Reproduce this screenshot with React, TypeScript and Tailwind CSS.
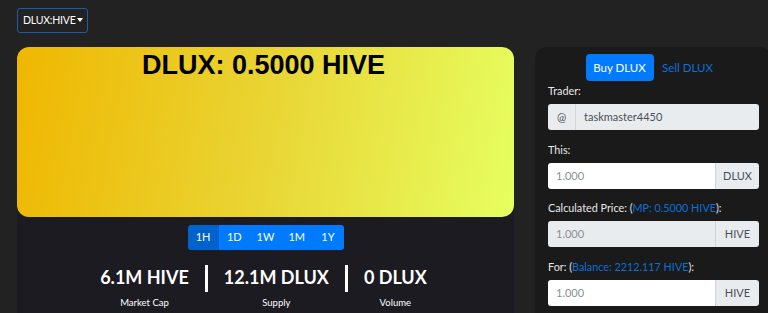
export default function App() {
  const font = { fontFamily: 'Lato, "Noto Sans", sans-serif' };
  return (
    <div className="w-[768px] h-[313px] overflow-hidden bg-[#222222] text-white" style={font}>
      <div className="pl-[17px] pt-[8px]">
        <button className="h-[25px] w-[71px] pl-[5px] border border-[#1f5ba6] rounded-[3px] text-[10.5px] tracking-[-0.2px] flex items-center gap-[1px] text-white">
          DLUX:HIVE
          <span className="inline-block w-0 h-0 border-l-[3.5px] border-r-[3.5px] border-t-[4px] border-l-transparent border-r-transparent border-t-white mb-[2px]" />
        </button>
      </div>
      <div className="flex pl-[17px] pt-[14px] gap-[21px]">
        <div className="w-[497px] h-[280px] bg-[#1c1b21] rounded-t-[12px] shrink-0">
          <div className="h-[170px] rounded-[12px] bg-[linear-gradient(100deg,#efb700_0%,#e9d534_50%,#e6ff60_100%)] flex justify-center">
            <div className="text-black font-bold text-[27px] leading-none mt-[5px] -ml-[4px]" style={{ fontFamily: '"Liberation Sans", Arial, sans-serif' }}>
              DLUX: 0.5000 HIVE
            </div>
          </div>
          <div className="flex justify-center mt-[8px]">
            <div className="flex rounded-[3px] overflow-hidden text-[11px] h-[25px] w-[156px]">
              <div className="bg-[#0062cc] flex-1 flex items-center justify-center">1H</div>
              {['1D', '1W', '1M', '1Y'].map((t) => (
                <div key={t} className="bg-[#007bff] flex-1 flex items-center justify-center">{t}</div>
              ))}
            </div>
          </div>
          <div className="flex justify-center items-start mt-[15px] -ml-[4px]">
            <Stat value="6.1M HIVE" label="Market Cap" />
            <Sep />
            <Stat value="12.1M DLUX" label="Supply" />
            <Sep />
            <Stat value="0 DLUX" label="Volume" />
          </div>
        </div>
        <div className="w-[237px] h-[280px] bg-[#1a1a1a] rounded-t-[12px] shrink-0 px-[13px] pt-[7px]">
          <div className="flex justify-center text-[11.5px]">
            <div className="bg-[#007bff] rounded-[4px] h-[27px] w-[68px] flex items-center justify-center">Buy DLUX</div>
            <div className="text-[#0a6fd8] h-[27px] w-[68px] flex items-center justify-center">Sell DLUX</div>
          </div>
          <Label>Trader:</Label>
          <div className="flex h-[26px] rounded-[3px] overflow-hidden bg-[#e9ecef] text-[11px] text-[#495057]">
            <div className="w-[28px] flex items-center justify-center border-r border-[#ced4da]">@</div>
            <div className="flex items-center pl-[8px]">taskmaster4450</div>
          </div>
          <Label className="mt-[10px]">This:</Label>
          <Field addon="DLUX" disabled={false} />
          <Label className="mt-[9px]">
            Calculated Price: (<span className="text-[#0a6fd8]">MP: 0.5000 HIVE</span>):
          </Label>
          <Field addon="HIVE" disabled />
          <Label className="mt-[10px]">
            For: (<span className="text-[#0a6fd8]">Balance: 2212.117 HIVE</span>):
          </Label>
          <Field addon="HIVE" disabled={false} />
        </div>
      </div>
    </div>
  );
}

function Stat({ value, label }: { value: string; label: string }) {
  return (
    <div className="flex flex-col items-center px-[16px]">
      <div className="text-[18px] font-bold leading-[24px]">{value}</div>
      <div className="text-[9.5px] mt-[7px]">{label}</div>
    </div>
  );
}

function Sep() {
  return <div className="w-[3px] h-[27px] bg-white" />;
}

function Label({ children, className }: { children: React.ReactNode; className?: string }) {
  return <div className={`text-[10.8px] text-[#e8e8e8] h-[20px] leading-[20px] mb-[3px] ${className ?? ''}`}>{children}</div>;
}

function Field({ addon, disabled }: { addon: string; disabled: boolean }) {
  return (
    <div className="flex h-[26px] rounded-[3px] overflow-hidden text-[11px]">
      <div className={`flex-1 flex items-center pl-[8px] text-[#8a8f94] ${disabled ? 'bg-[#e9ecef]' : 'bg-white'}`}>1.000</div>
      <div className="w-[44px] flex items-center justify-center bg-[#e9ecef] text-[#495057] border-l border-[#ced4da]">{addon}</div>
    </div>
  );
}
